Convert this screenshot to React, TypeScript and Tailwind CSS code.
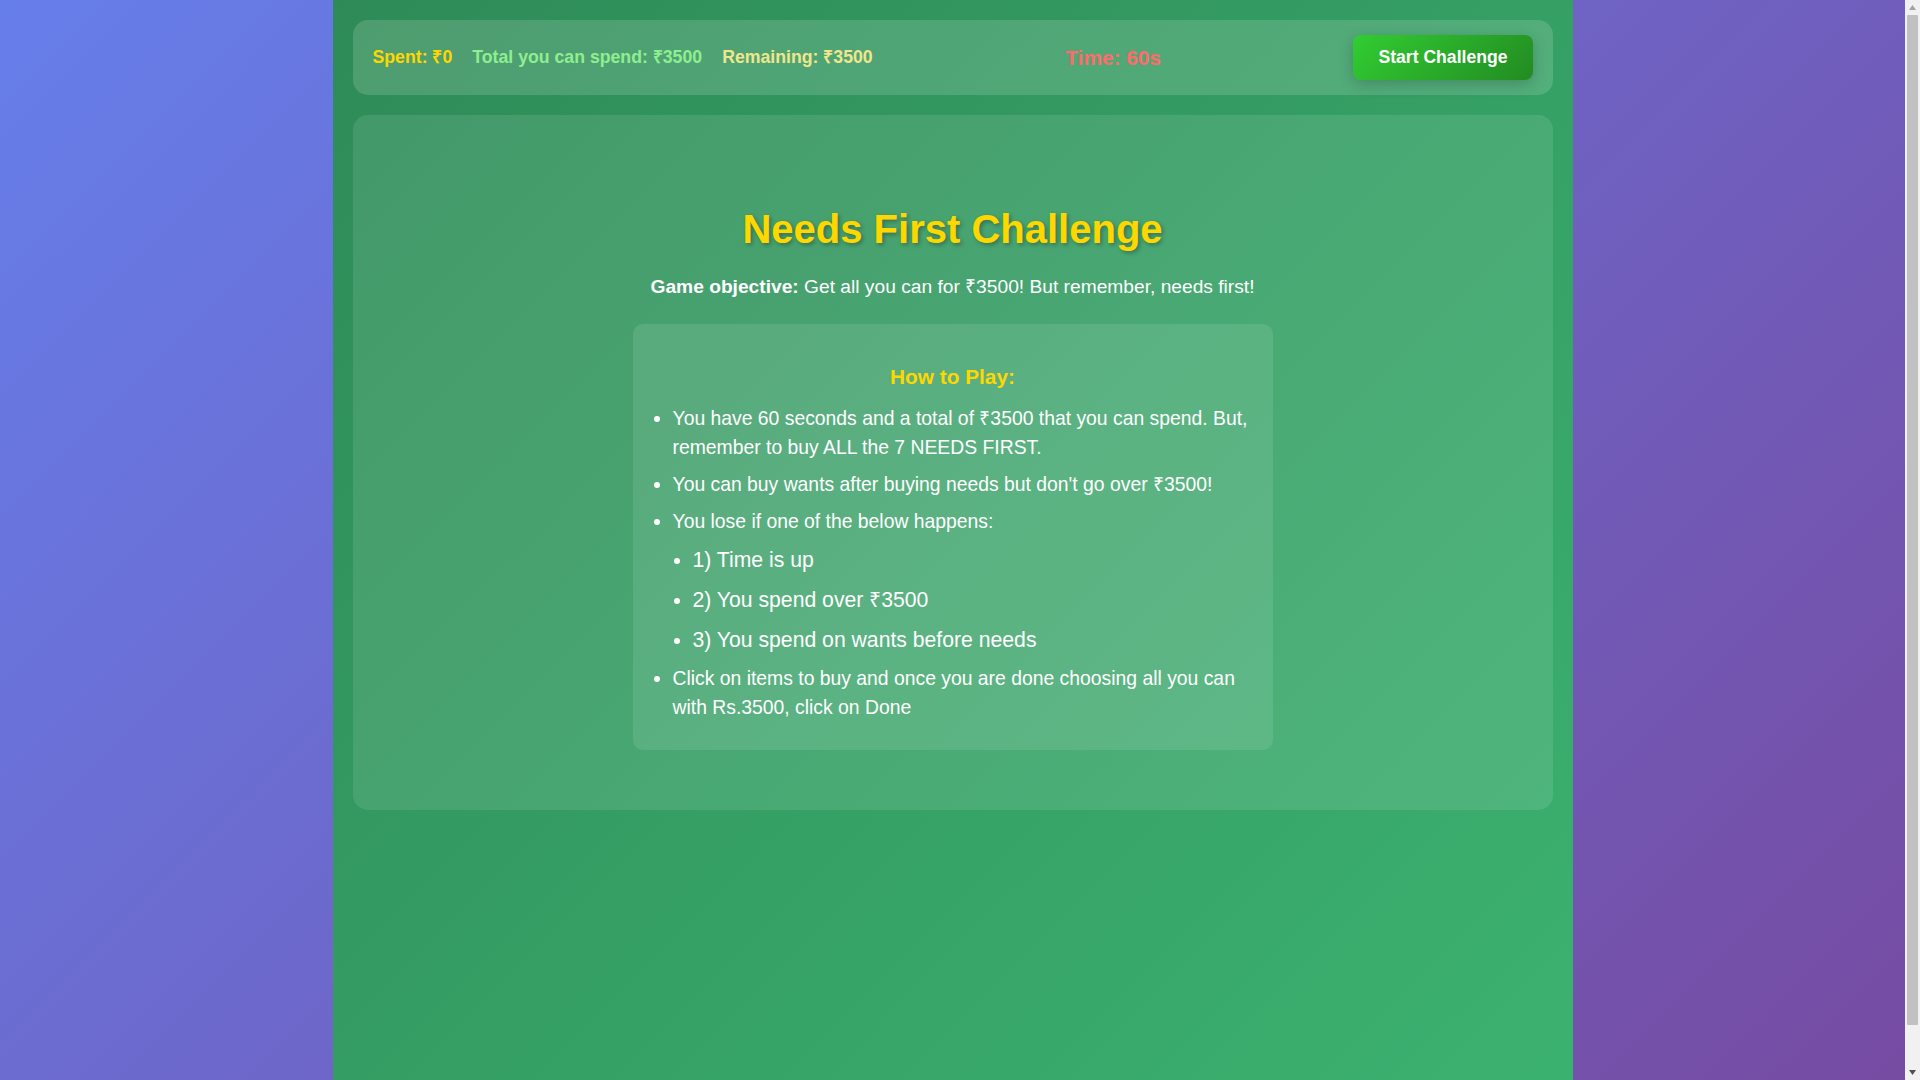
const rules = [
  'You have 60 seconds and a total of ₹3500 that you can spend. But, remember to buy ALL the 7 NEEDS FIRST.',
  'You can buy wants after buying needs but don\'t go over ₹3500!',
];

const loseReasons = ['1) Time is up', '2) You spend over ₹3500', '3) You spend on wants before needs'];

function Scrollbar() {
  return (
    <div className="flex h-screen w-[15px] shrink-0 flex-col bg-[#f1f1f1]">
      <div className="flex h-[15px] items-center justify-center">
        <svg width="7" height="5" viewBox="0 0 7 5">
          <path d="M0 5 L3.5 0 L7 5 Z" fill="#a3a3a3" />
        </svg>
      </div>
      <div className="mx-[2px] h-[1010px] rounded-[1px] bg-[#c1c1c1]" />
      <div className="flex-1" />
      <div className="flex h-[15px] items-center justify-center">
        <svg width="7" height="5" viewBox="0 0 7 5">
          <path d="M0 0 L7 0 L3.5 5 Z" fill="#505050" />
        </svg>
      </div>
    </div>
  );
}

export default function App() {
  return (
    <div className="flex h-screen overflow-hidden bg-[linear-gradient(135deg,#667eea_0%,#764ba2_100%)] font-['Liberation_Sans',Arial,sans-serif] text-white">
      <div className="min-w-0 flex-1">
        <div className="mx-auto box-content h-[1120px] max-w-[1200px] bg-[linear-gradient(135deg,#2e8b57_0%,#3cb371_100%)] px-5 py-5">
          {/* stats bar */}
          <div className="flex items-center justify-between rounded-[15px] bg-white/15 px-5 py-[15px]">
            <div className="flex gap-5 text-[17.7px] font-bold">
              <span className="text-[#ffd700]">Spent: ₹0</span>
              <span className="text-[#90ee90]">Total you can spend: ₹3500</span>
              <span className="text-[#f0e68c]">Remaining: ₹3500</span>
            </div>
            <div className="text-[20.8px] font-bold text-[#ff6b6b]">Time: 60s</div>
            <button className="rounded-lg bg-[linear-gradient(135deg,#32cd32,#228b22)] px-[25px] py-3 text-[17.6px] leading-[21px] font-bold text-white shadow-[0_4px_15px_rgba(0,0,0,0.2)]">
              Start Challenge
            </button>
          </div>

          {/* intro card */}
          <div className="mt-5 rounded-[15px] bg-white/10 px-10 pt-[91px] pb-[60px] text-center">
            <h1 className="text-[40px] leading-[46px] font-bold text-[#ffd700] [text-shadow:2px_2px_4px_rgba(0,0,0,0.3)]">
              Needs First Challenge
            </h1>
            <p className="mt-[24px] text-[19.2px] leading-[22px]">
              <strong>Game objective:</strong> Get all you can for ₹3500! But remember, needs first!
            </p>
            <div className="mx-auto mt-[26px] w-[640px] rounded-[10px] bg-white/10 p-5 text-left">
              <h3 className="mt-[21px] mb-[15px] text-center text-[20.8px] leading-6 font-bold text-[#ffd700]">How to Play:</h3>
              <ul className="list-disc pl-5 text-[19.35px] leading-[29.3px]">
                {rules.map((r) => (
                  <li key={r} className="mb-[7.5px]">
                    {r}
                  </li>
                ))}
                <li className="mb-2">
                  You lose if one of the below happens:
                  <ul className="mt-2 list-disc pl-5 text-[21.2px] leading-[31.8px]">
                    {loseReasons.map((r) => (
                      <li key={r} className="mb-2">
                        {r}
                      </li>
                    ))}
                  </ul>
                </li>
                <li className="mb-2">
                  Click on items to buy and once you are done choosing all you can with Rs.3500, click on Done
                </li>
              </ul>
            </div>
          </div>
        </div>
      </div>
      <Scrollbar />
    </div>
  );
}
